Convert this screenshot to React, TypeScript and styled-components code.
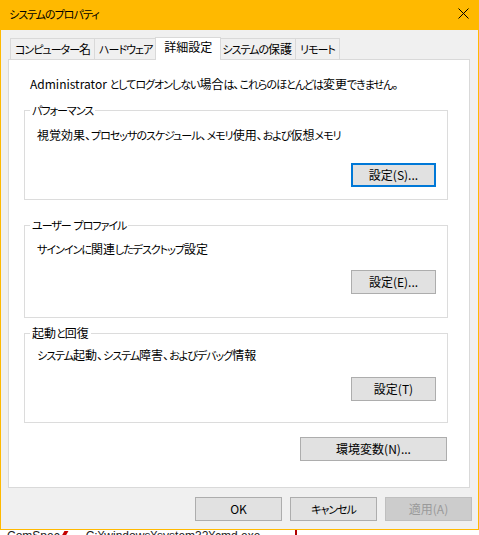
import React, { FC } from "react";
import styled, { createGlobalStyle, css } from "styled-components";

const GlobalStyle = createGlobalStyle`
  html, body {
    margin: 0;
    padding: 0;
    background: #ffffff;
  }
  body {
    font-family: "Noto Sans CJK JP", "Noto Sans", sans-serif;
    font-size: 12px;
    color: #000;
    font-feature-settings: "palt";
  }
`;

const KANA_RUN = /([\u3041-\u30ff]+)/;

const JText: FC<{ children: string }> = ({ children }) => (
  <>
    {children.split(KANA_RUN).map((part, i) =>
      i % 2 === 1 ? <Kana key={i}>{part}</Kana> : <React.Fragment key={i}>{part}</React.Fragment>
    )}
  </>
);

const tabs = ["コンピューター名", "ハードウェア", "詳細設定", "システムの保護", "リモート"];
const ACTIVE_TAB = 2;

interface GroupData {
  title: string;
  desc: string;
  button: string;
  top: number;
  padTop: number;
  gap: number;
  padBottom: number;
  focused?: boolean;
}

const groups: GroupData[] = [
  {
    title: "パフォーマンス",
    desc: "視覚効果、プロセッサのスケジュール、メモリ使用、および仮想メモリ",
    button: "設定(S)...",
    top: 10,
    padTop: 9,
    gap: 20,
    padBottom: 12,
    focused: true,
  },
  {
    title: "ユーザー プロファイル",
    desc: "サインインに関連したデスクトップ設定",
    button: "設定(E)...",
    top: 17,
    padTop: 8,
    gap: 13,
    padBottom: 23,
  },
  {
    title: "起動と回復",
    desc: "システム起動、システム障害、およびデバッグ情報",
    button: "設定(T)",
    top: 7,
    padTop: 6,
    gap: 14,
    padBottom: 21,
  },
];

const App = () => (
  <>
    <GlobalStyle />
    <Window>
      <TitleBar>
        <Title>
          <JText>システムのプロパティ</JText>
        </Title>
        <CloseButton type="button" aria-label="閉じる">
          <svg width="11" height="11" viewBox="0 0 11 11">
            <path d="M0.5 0.5L10.5 10.5M10.5 0.5L0.5 10.5" stroke="#000" strokeWidth="1" />
          </svg>
        </CloseButton>
      </TitleBar>
      <Body>
        <TabRow>
          {tabs.map((t, i) => (
            <Tab key={t} $active={i === ACTIVE_TAB}>
              <JText>{t}</JText>
            </Tab>
          ))}
        </TabRow>
        <Panel>
          <Intro>
            Administrator <JText>としてログオンしない場合は、これらのほとんどは変更できません。</JText>
          </Intro>
          {groups.map((g) => (
            <Group key={g.title} $top={g.top} $padTop={g.padTop} $padBottom={g.padBottom}>
              <Legend>
                <JText>{g.title}</JText>
              </Legend>
              <Desc>
                <JText>{g.desc}</JText>
              </Desc>
              <ButtonRow $gap={g.gap}>
                <Button type="button" $focused={g.focused}>
                  {g.button}
                </Button>
              </ButtonRow>
            </Group>
          ))}
          <EnvRow>
            <Button type="button" $width={147}>
              環境変数(N)...
            </Button>
          </EnvRow>
        </Panel>
        <Footer>
          <Button type="button" $width={87}>
            OK
          </Button>
          <Button type="button" $width={87}>
            <JText>キャンセル</JText>
          </Button>
          <Button type="button" $width={87} disabled>
            適用(A)
          </Button>
        </Footer>
      </Body>
    </Window>
    <Backdrop>
      <BackLine>
        <span>ComSpec</span>
        <RedMark />
        <BackPath>C:¥windows¥system32¥cmd.exe</BackPath>
        <RedRule />
      </BackLine>
    </Backdrop>
  </>
);

const Kana = styled.span`
  font-size: 11px;
  letter-spacing: -1px;
`;

const Window = styled.div`
  width: 479px;
  height: 530px;
  box-sizing: border-box;
  border: 1px solid #ffb900;
  border-top: none;
  background: #f0f0f0;
  display: flex;
  flex-direction: column;
`;

const TitleBar = styled.div`
  height: 30px;
  margin: 0 -1px;
  background: #ffb900;
  display: flex;
  align-items: center;
  justify-content: space-between;
  padding-left: 9px;
`;

const Title = styled.div`
  padding-bottom: 2px;
  line-height: 16px;
`;

const CloseButton = styled.button`
  width: 32px;
  height: 30px;
  border: none;
  background: transparent;
  padding: 0 0 4px 0;
  display: flex;
  align-items: center;
  justify-content: center;
`;

const Body = styled.div`
  padding: 0 8px 0 7px;
  display: flex;
  flex-direction: column;
`;

const TabRow = styled.div`
  margin-top: 7px;
  height: 22px;
  padding-left: 2px;
  display: flex;
  align-items: flex-end;
`;

const Tab = styled.div<{ $active?: boolean }>`
  position: relative;
  box-sizing: border-box;
  height: 21px;
  padding: 0 4px 1px;
  border: 1px solid #d9d9d9;
  border-bottom: none;
  background: #f0f0f0;
  display: flex;
  align-items: center;
  line-height: 16px;
  white-space: nowrap;
  & + & {
    margin-left: -1px;
  }
  ${(p) =>
    p.$active &&
    css`
      z-index: 1;
      height: 23px;
      margin: 0 -2px -1px -2px;
      padding: 0 8px 4px;
      background: #ffffff;
      & + & {
        margin-left: -2px;
      }
      & + div {
        margin-left: -2px;
      }
    `}
`;

const Panel = styled.div`
  box-sizing: border-box;
  height: 429px;
  border: 1px solid #d9d9d9;
  background: #ffffff;
  padding: 16px 21px 0 15px;
  display: flex;
  flex-direction: column;
`;

const Intro = styled.div`
  padding-left: 6px;
  line-height: 16px;
  white-space: nowrap;
`;

const Group = styled.fieldset<{ $top: number; $padTop: number; $padBottom: number }>`
  box-sizing: border-box;
  width: 424px;
  margin: ${(p) => p.$top}px 0 0;
  padding: ${(p) => p.$padTop}px 11px ${(p) => p.$padBottom}px 12px;
  border: 1px solid #dcdcdc;
  min-width: 0;
`;

const Legend = styled.legend`
  margin-left: -7px;
  padding: 0 2px;
  line-height: 16px;
`;

const Desc = styled.div`
  line-height: 16px;
  white-space: nowrap;
`;

const ButtonRow = styled.div<{ $gap: number }>`
  margin-top: ${(p) => p.$gap}px;
  display: flex;
  justify-content: flex-end;
`;

const Button = styled.button<{ $width?: number; $focused?: boolean }>`
  box-sizing: border-box;
  width: ${(p) => p.$width ?? 85}px;
  height: 24px;
  padding: 0 0 2px;
  font-family: inherit;
  font-size: 12px;
  font-feature-settings: "palt";
  color: #000;
  background: #e1e1e1;
  border: 1px solid #adadad;
  white-space: nowrap;
  ${(p) =>
    p.$focused &&
    css`
      border: 2px solid #0078d7;
    `}
  &:disabled {
    background: #cccccc;
    border-color: #bfbfbf;
    color: #9a9a9a;
  }
`;

const EnvRow = styled.div`
  width: 424px;
  margin-top: 14px;
  display: flex;
  justify-content: flex-end;
  padding-right: 1px;
  box-sizing: border-box;
`;

const Footer = styled.div`
  margin-right: -2px;
  padding-top: 9px;
  display: flex;
  justify-content: flex-end;
  gap: 8px;
`;

const Backdrop = styled.div`
  height: 5px;
  overflow: hidden;
  background: #ffffff;
  font-family: "Liberation Sans", Arial, sans-serif;
  font-size: 12px;
`;

const BackLine = styled.div`
  margin-top: -2px;
  padding-left: 7px;
  display: flex;
  align-items: flex-start;
  line-height: 16px;
  color: #1a1a1a;
`;

const RedMark = styled.span`
  width: 4px;
  height: 12px;
  margin: 3px 0 0 1px;
  background: #c40000;
  transform: skewX(-30deg);
`;

const BackPath = styled.span`
  margin-left: 21px;
`;

const RedRule = styled.span`
  width: 2px;
  height: 16px;
  margin-left: 35px;
  background: #b00000;
`;

export default App;
